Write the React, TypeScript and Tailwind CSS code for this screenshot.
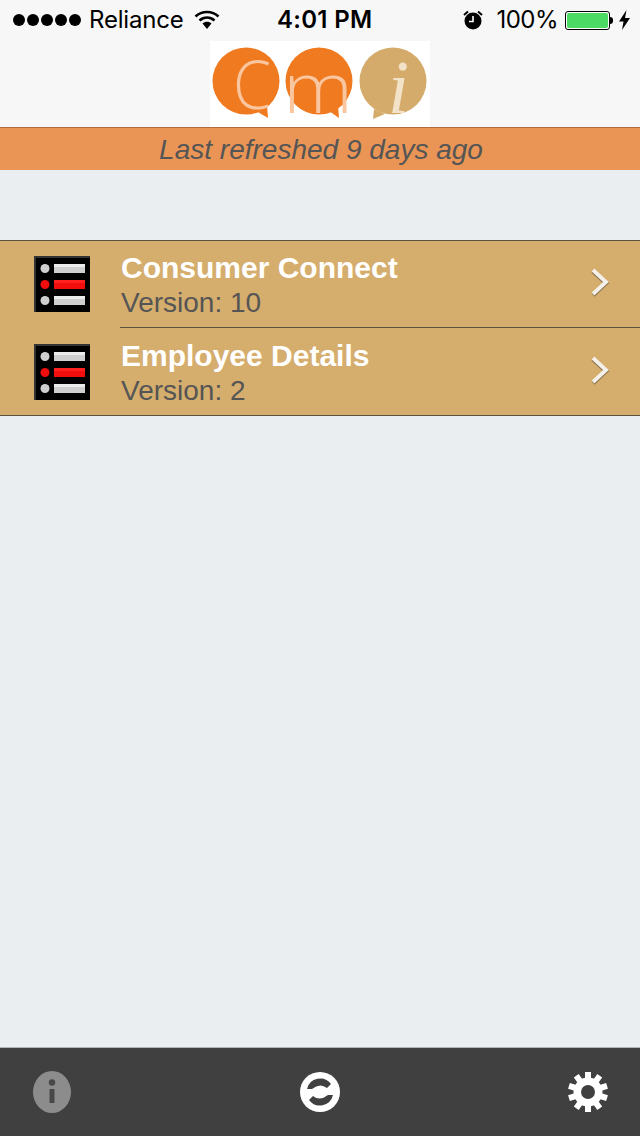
const SANS = "font-['Liberation_Sans',Arial,sans-serif]";

function StatusBar() {
  return (
    <div className="flex h-10 items-center font-['Inter',sans-serif] text-[24px] leading-[30px] text-black">
      <div className="flex w-[277px] items-center pl-[13px]">
        <div className="flex gap-[2px]">
          {[1, 2, 3, 4, 5].map((i) => (
            <div key={i} className="h-3 w-3 rounded-full bg-black" />
          ))}
        </div>
        <span className="ml-[8px] tracking-[-0.2px]">Reliance</span>
        <svg className="ml-[11px]" width="26" height="20" viewBox="0 0 26 20">
          <path d="M1.500 6.500C8 .5 18 .5 24.500 6.500" fill="none" stroke="#000" strokeWidth="2.6" />
          <path d="M5.500 10.500C10 6.500 16 6.500 20.500 10.500" fill="none" stroke="#000" strokeWidth="2.6" />
          <path d="M8.500 13.500C11 11 15 11 17.500 13.500L13 19Z" fill="#000" />
        </svg>
      </div>
      <span className="font-semibold tracking-[0.3px]">4:01 PM</span>
      <div className="flex flex-1 items-center justify-end pr-[10px]">
        <svg width="20" height="20" viewBox="0 0 20 20">
          <circle cx="10" cy="11" r="8.500" fill="#000" />
          <path d="M10 6v5.500H6" fill="none" stroke="#fff" strokeWidth="1.6" />
          <path d="M1 5l4-3.500M19 5l-4-3.500" stroke="#000" strokeWidth="2" />
        </svg>
        <span className="ml-[13px] tracking-[-0.5px]">100%</span>
        <div className="ml-[7px] flex items-center">
          <div className="h-[19px] w-[45px] rounded-[3px] border border-black bg-white p-px">
            <div className="h-full w-full rounded-[2px] bg-[#4cd964]" />
          </div>
          <div className="h-[7px] w-[3px] rounded-r-sm bg-black" />
        </div>
        <svg className="ml-[6px]" width="11" height="20" viewBox="0 0 11 20">
          <path d="M7.500 0 0 11.500h4.500L3 20l8-12H6z" fill="#000" />
        </svg>
      </div>
    </div>
  );
}

function Logo() {
  return (
    <svg width="220" height="86" viewBox="0 0 220 86" className="overflow-visible bg-white">
      <circle cx="36" cy="40" r="33.500" fill="#f07a20" />
      <path d="M46 70l12 7-1-13z" fill="#f07a20" />
      <text x="23" y="68" fontFamily="Open Sans" fontWeight="300" fontSize="66" fill="#f9c6a0" textLength="38" lengthAdjust="spacingAndGlyphs">C</text>
      <circle cx="109" cy="40" r="33.500" fill="#f07a20" />
      <path d="M119 70l10 7-1-13z" fill="#f07a20" />
      <text x="73" y="72" fontFamily="Open Sans" fontWeight="300" fontSize="70" fill="#f9c6a0" textLength="70" lengthAdjust="spacingAndGlyphs">m</text>
      <circle cx="183" cy="40" r="33.500" fill="#d4ab6a" />
      <path d="M164 68l-1 10 12-5z" fill="#d4ab6a" />
      <text x="178" y="72" fontFamily="Liberation Serif" fontStyle="italic" fontSize="76" fill="#f1e2c8">i</text>
    </svg>
  );
}

function ListIcon() {
  const row = (y: number, c: string, top: string, key: number) => (
    <g key={key}>
      <circle cx="11" cy={y} r="4.500" fill={c} />
      <rect x="20" y={y - 4.500} width="31" height="9" fill={c} />
      <rect x="20" y={y - 4.500} width="31" height="3" fill={top} />
    </g>
  );
  return (
    <svg width="56" height="56" viewBox="0 0 56 56" className="shrink-0">
      <rect width="56" height="56" fill="#000" />
      <rect width="56" height="2" fill="#333" />
      <rect width="2" height="56" fill="#333" />
      {row(12.500, '#cfcfcf', '#ececec', 1)}
      {row(28.500, '#f20d0d', '#ff2020', 2)}
      {row(44.500, '#cfcfcf', '#ececec', 3)}
    </svg>
  );
}

function Chevron() {
  return (
    <svg className="-mt-1" width="20" height="30" viewBox="0 0 20 30">
      <path d="M3 3l13 12L3 27" fill="none" stroke="#8a7350" strokeWidth="4.500" transform="translate(0 1)" />
      <path d="M3 3l13 12L3 27" fill="none" stroke="#f4f1ea" strokeWidth="3.800" />
    </svg>
  );
}

function Row({ title, version, last }: { title: string; version: string; last?: boolean }) {
  return (
    <div className="flex items-center pl-[34px]">
      <div className={last ? '' : 'mb-[2px]'}>
        <ListIcon />
      </div>
      <div className={`ml-[30px] flex h-[87px] flex-1 items-center pr-[30px] ${last ? '' : 'border-b border-[#5a5140]'}`}>
        <div className={`mt-[2px] flex-1 pl-px ${SANS}`}>
          <p className="text-[30px] font-bold leading-[34px] text-white">{title}</p>
          <p className="mt-px text-[28px] leading-[33px] text-[#555555]">{version}</p>
        </div>
        <Chevron />
      </div>
    </div>
  );
}

function InfoIcon() {
  return (
    <svg width="40" height="44" viewBox="0 0 40 44">
      <ellipse cx="20" cy="22" rx="19" ry="21" fill="#8c8c8c" />
      <circle cx="20" cy="12.500" r="3.200" fill="#484848" />
      <rect x="17.500" y="19" width="5" height="14" fill="#484848" />
    </svg>
  );
}

function RefreshIcon() {
  return (
    <svg width="40" height="40" viewBox="0 0 40 40">
      <circle cx="20" cy="20" r="20" fill="#fff" />
      <path d="M7 17A13.500 13.500 0 0 1 31 12L27 16Q20 10.500 12 17Z" fill="#404040" />
      <path d="M33 23A13.500 13.500 0 0 1 9 28L13 24Q20 29.500 28 23Z" fill="#404040" />
    </svg>
  );
}

function GearIcon() {
  const teeth = [0, 36, 72, 108, 144, 180, 216, 252, 288, 324];
  return (
    <svg width="40" height="40" viewBox="0 0 40 40">
      {teeth.map((a) => (
        <rect key={a} x="17" y="0" width="6" height="10" fill="#fff" transform={`rotate(${a} 20 20)`} />
      ))}
      <circle cx="20" cy="20" r="14.500" fill="#fff" />
      <circle cx="20" cy="20" r="7" fill="#404040" />
    </svg>
  );
}

export default function App() {
  return (
    <div className="flex h-[1136px] w-[640px] flex-col bg-[#eaeef1]">
      <div className="border-b border-[#b06c3c] bg-[#f7f7f7]">
        <StatusBar />
        <div className="flex h-[87px] justify-center pt-px">
          <Logo />
        </div>
      </div>
      <div className={`h-[42px] bg-[#ea9555] pl-[2px] text-center text-[28px] italic leading-[44px] text-[#555555] ${SANS}`}>
        Last refreshed 9 days ago
      </div>
      <div className="mt-[70px] border-y border-[#5a5140] bg-[#d5ad6d]">
        <Row title="Consumer Connect" version="Version: 10" />
        <Row title="Employee Details" version="Version: 2" last />
      </div>
      <div className="flex-1" />
      <div className="flex h-[89px] items-center justify-between border-t border-[#b4b4b4] bg-[#404040] px-[32px]">
        <InfoIcon />
        <RefreshIcon />
        <GearIcon />
      </div>
    </div>
  );
}
